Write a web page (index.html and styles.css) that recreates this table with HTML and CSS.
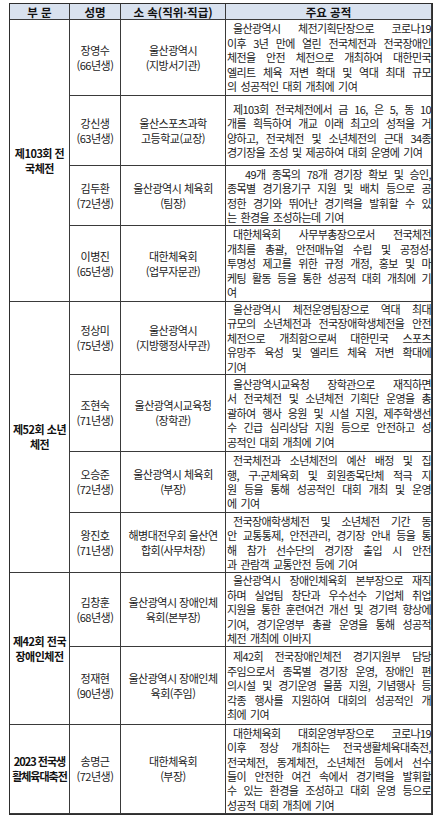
FILE: index.html
```html
<!DOCTYPE html>
<html lang="ko">
<head>
<meta charset="utf-8">
<title>유공자 명단</title>
<link rel="stylesheet" href="styles.css">
</head>
<body>
<div class="sheet">
  <div class="c h">부 문</div>
  <div class="c h">성명</div>
  <div class="c h">소 속(직위·직급)</div>
  <div class="c h">주요 공적</div>

  <div class="c grp span4"><span>제103회 전</span><span>국체전</span></div>
  <div class="c"><span>장영수</span><span>(66년생)</span></div>
  <div class="c"><span>울산광역시</span><span>(지방서기관)</span></div>
  <div class="c desc">
    <span class="ln in">울산광역시 체전기획단장으로 코로나19</span>
    <span class="ln">이후 3년 만에 열린 전국체전과 전국장애인</span>
    <span class="ln">체전을 안전 체전으로 개최하여 대한민국</span>
    <span class="ln">엘리트 체육 저변 확대 및 역대 최대 규모</span>
    <span class="ln last">의 성공적인 대회 개최에 기여</span>
  </div>

  <div class="c"><span>강신생</span><span>(63년생)</span></div>
  <div class="c"><span>울산스포츠과학</span><span>고등학교(교장)</span></div>
  <div class="c desc">
    <span class="ln in">제103회 전국체전에서 금 16, 은 5, 동 10</span>
    <span class="ln">개를 획득하여 개교 이래 최고의 성적을 거</span>
    <span class="ln">양하고, 전국체전 및 소년체전의 근대 34종</span>
    <span class="ln last">경기장을 조성 및 제공하여 대회 운영에 기여</span>
  </div>

  <div class="c"><span>김두환</span><span>(72년생)</span></div>
  <div class="c"><span>울산광역시 체육회</span><span>(팀장)</span></div>
  <div class="c desc">
    <span class="ln in wide">49개 종목의 78개 경기장 확보 및 승인,</span>
    <span class="ln">종목별 경기용기구 지원 및 배치 등으로 공</span>
    <span class="ln">정한 경기와 뛰어난 경기력을 발휘할 수 있</span>
    <span class="ln last">는 환경을 조성하는데 기여</span>
  </div>

  <div class="c"><span>이병진</span><span>(65년생)</span></div>
  <div class="c"><span>대한체육회</span><span>(업무자문관)</span></div>
  <div class="c desc">
    <span class="ln in">대한체육회 사무부총장으로서 전국체전</span>
    <span class="ln">개최를 총괄, 안전매뉴얼 수립 및 공정성·</span>
    <span class="ln">투명성 제고를 위한 규정 개정, 홍보 및 마</span>
    <span class="ln">케팅 활동 등을 통한 성공적 대회 개최에 기</span>
    <span class="ln last">여</span>
  </div>

  <div class="c grp span4"><span>제52회 소년</span><span>체전</span></div>
  <div class="c"><span>정상미</span><span>(75년생)</span></div>
  <div class="c"><span>울산광역시</span><span>(지방행정사무관)</span></div>
  <div class="c desc">
    <span class="ln in">울산광역시 체전운영팀장으로 역대 최대</span>
    <span class="ln">규모의 소년체전과 전국장애학생체전을 안전</span>
    <span class="ln">체전으로 개최함으로써 대한민국 스포츠</span>
    <span class="ln">유망주 육성 및 엘리트 체육 저변 확대에</span>
    <span class="ln last">기여</span>
  </div>

  <div class="c"><span>조현숙</span><span>(71년생)</span></div>
  <div class="c"><span>울산광역시교육청</span><span>(장학관)</span></div>
  <div class="c desc">
    <span class="ln in">울산광역시교육청 장학관으로 재직하면</span>
    <span class="ln">서 전국체전 및 소년체전 기획단 운영을 총</span>
    <span class="ln">괄하여 행사 응원 및 시설 지원, 제주학생선</span>
    <span class="ln">수 긴급 심리상담 지원 등으로 안전하고 성</span>
    <span class="ln last">공적인 대회 개최에 기여</span>
  </div>

  <div class="c"><span>오승준</span><span>(72년생)</span></div>
  <div class="c"><span>울산광역시 체육회</span><span>(부장)</span></div>
  <div class="c desc">
    <span class="ln in">전국체전과 소년체전의 예산 배정 및 집</span>
    <span class="ln">행, 구·군체육회 및 회원종목단체 적극 지</span>
    <span class="ln">원 등을 통해 성공적인 대회 개최 및 운영</span>
    <span class="ln last">에 기여</span>
  </div>

  <div class="c"><span>왕진호</span><span>(71년생)</span></div>
  <div class="c"><span>해병대전우회 울산연</span><span>합회(사무처장)</span></div>
  <div class="c desc">
    <span class="ln in">전국장애학생체전 및 소년체전 기간 동</span>
    <span class="ln">안 교통통제, 안전관리, 경기장 안내 등을 통</span>
    <span class="ln">해 참가 선수단의 경기장 출입 시 안전</span>
    <span class="ln last">과 관람객 교통안전 등에 기여</span>
  </div>

  <div class="c grp span2"><span>제42회 전국</span><span>장애인체전</span></div>
  <div class="c"><span>김창훈</span><span>(68년생)</span></div>
  <div class="c"><span>울산광역시 장애인체</span><span>육회(본부장)</span></div>
  <div class="c desc">
    <span class="ln in">울산광역시 장애인체육회 본부장으로 재직</span>
    <span class="ln">하며 실업팀 창단과 우수선수 기업체 취업</span>
    <span class="ln">지원을 통한 훈련여건 개선 및 경기력 향상에</span>
    <span class="ln">기여, 경기운영부 총괄 운영을 통해 성공적</span>
    <span class="ln last">체전 개최에 이바지</span>
  </div>

  <div class="c"><span>정재현</span><span>(90년생)</span></div>
  <div class="c"><span>울산광역시 장애인체</span><span>육회(주임)</span></div>
  <div class="c desc">
    <span class="ln in">제42회 전국장애인체전 경기지원부 담당</span>
    <span class="ln">주임으로서 종목별 경기장 운영, 장애인 편</span>
    <span class="ln">의시설 및 경기운영 물품 지원, 기념행사 등</span>
    <span class="ln">각종 행사를 지원하여 대회의 성공적인 개</span>
    <span class="ln last">최에 기여</span>
  </div>

  <div class="c grp"><span class="tight">2023 전국생</span><span class="tight">활체육대축전</span></div>
  <div class="c"><span>송명근</span><span>(72년생)</span></div>
  <div class="c"><span>대한체육회</span><span>(부장)</span></div>
  <div class="c desc">
    <span class="ln in">대한체육회 대회운영부장으로 코로나19</span>
    <span class="ln">이후 정상 개최하는 전국생활체육대축전,</span>
    <span class="ln">전국체전, 동계체전, 소년체전 등에서 선수</span>
    <span class="ln">들이 안전한 여건 속에서 경기력을 발휘할</span>
    <span class="ln">수 있는 환경을 조성하고 대회 운영 등으로</span>
    <span class="ln last">성공적 대회 개최에 기여</span>
  </div>
</div>
</body>
</html>
```

FILE: styles.css
```css
* {
  box-sizing: border-box;
}

body {
  margin: 0;
  background: #ffffff;
  font-family: "Noto Sans CJK KR", "Noto Sans", sans-serif;
  color: #222222;
}

.sheet {
  display: grid;
  grid-template-columns: 60px 51px 105px 206px;
  grid-template-rows: 16px 76px 70px 60px 76px 73px 77px 61px 60px 74px 78px 89px;
  width: 424px;
  margin: 3px 0 0 9px;
  border: 1px solid #2e2e2e;
}

.c {
  border-right: 1px solid #3a3a3a;
  border-bottom: 1px solid #3a3a3a;
  display: flex;
  flex-direction: column;
  justify-content: center;
  align-items: center;
  text-align: center;
  font-size: 11px;
  line-height: 15px;
  letter-spacing: -0.5px;
}

.h {
  background: #d9e2ef;
  font-weight: bold;
  font-size: 11.5px;
  line-height: 14px;
  letter-spacing: 0;
  color: #111111;
}

.grp {
  font-weight: bold;
  color: #111111;
}

.span4 {
  grid-row: span 4;
}

.span2 {
  grid-row: span 2;
}

.tight {
  letter-spacing: -1px;
  white-space: nowrap;
}

.desc {
  align-items: stretch;
  padding: 0 0 0 1px;
  text-align: justify;
  letter-spacing: -0.6px;
  line-height: 14.4px;
}

.ln {
  display: block;
  text-align: justify;
  text-align-last: justify;
}

.ln.last {
  text-align-last: left;
  word-spacing: 1.5px;
}

.ln.in {
  padding-left: 6px;
}

.ln.in.wide {
  padding-left: 18px;
}
```
